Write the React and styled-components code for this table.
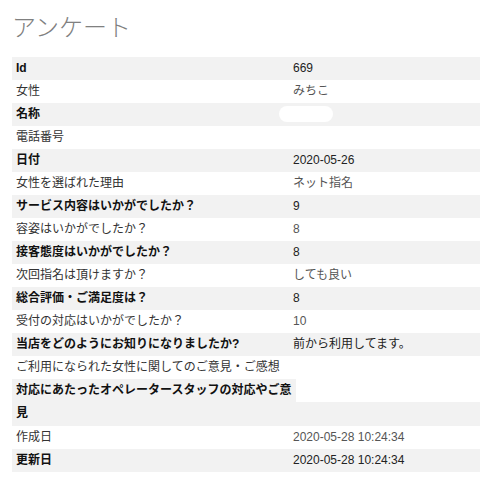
import React from "react";
import styled, { createGlobalStyle } from "styled-components";

const GlobalStyle = createGlobalStyle`
  body {
    margin: 0;
    background: #fff;
    font-family: "Liberation Sans", "Noto Sans CJK JP", sans-serif;
  }
`;

const Page = styled.div`
  padding: 0 0 0 12px;
`;

const Title = styled.h1`
  margin: 0;
  padding-top: 9px;
  height: 57px;
  box-sizing: border-box;
  font-size: 24px;
  line-height: 34px;
  font-weight: 300;
  color: #808080;
  font-family: "Noto Sans CJK JP", sans-serif;
`;

const Sheet = styled.div`
  display: flex;
  flex-direction: column;
  font-size: 12px;
`;

const Row = styled.div`
  display: grid;
  grid-template-columns: 277px 1fr;
  height: 23px;
  background: ${(p) => (p.$striped ? "#f2f2f2" : "#fff")};
`;

const Label = styled.div`
  padding-left: 4px;
  line-height: 23px;
  white-space: nowrap;
  font-weight: ${(p) => (p.$striped ? 700 : 400)};
  color: ${(p) => (p.$striped ? "#111" : "#333")};
`;

const Value = styled.div`
  padding-left: 4px;
  line-height: 23px;
  white-space: nowrap;
  color: ${(p) => (p.$striped ? "#222" : "#555")};
`;

const Redacted = styled.span`
  display: inline-block;
  vertical-align: middle;
  width: 54px;
  height: 16px;
  margin-left: -14px;
  margin-top: -2px;
  border-radius: 8px;
  background: #fff;
`;

const WrapRow = styled.div`
  display: grid;
  grid-template-columns: 284px 1fr;
  grid-template-rows: 23px 24px;
`;

const WrapStrip = styled.div`
  grid-column: 1 / -1;
  grid-row: 2;
  background: #f2f2f2;
`;

const WrapLabel = styled.div`
  grid-column: 1;
  grid-row: 1 / 3;
  padding-left: 4px;
  line-height: 23px;
  font-weight: 700;
  color: #111;
  background: #f2f2f2;
`;

const rows = [
  { label: "Id", value: "669" },
  { label: "女性", value: "みちこ" },
  { label: "名称", redacted: true },
  { label: "電話番号", value: "" },
  { label: "日付", value: "2020-05-26" },
  { label: "女性を選ばれた理由", value: "ネット指名" },
  { label: "サービス内容はいかがでしたか？", value: "9" },
  { label: "容姿はいかがでしたか？", value: "8" },
  { label: "接客態度はいかがでしたか？", value: "8" },
  { label: "次回指名は頂けますか？", value: "しても良い" },
  { label: "総合評価・ご満足度は？", value: "8" },
  { label: "受付の対応はいかがでしたか？", value: "10" },
  { label: "当店をどのようにお知りになりましたか?", value: "前から利用してます。" },
  { label: "ご利用になられた女性に関してのご意見・ご感想", value: "" },
  { label: "対応にあたったオペレータースタッフの対応やご意見", value: "", wrap: true },
  { label: "作成日", value: "2020-05-28 10:24:34" },
  { label: "更新日", value: "2020-05-28 10:24:34" },
];

export default function App() {
  return (
    <>
      <GlobalStyle />
      <Page>
        <Title>アンケート</Title>
        <Sheet>
          {rows.map((row, i) => {
            const striped = i % 2 === 0;
            if (row.wrap) {
              return (
                <WrapRow key={i}>
                  <WrapStrip />
                  <WrapLabel>{row.label}</WrapLabel>
                </WrapRow>
              );
            }
            return (
              <Row key={i} $striped={striped}>
                <Label $striped={striped}>{row.label}</Label>
                <Value $striped={striped}>
                  {row.redacted ? <Redacted /> : row.value}
                </Value>
              </Row>
            );
          })}
        </Sheet>
      </Page>
    </>
  );
}
